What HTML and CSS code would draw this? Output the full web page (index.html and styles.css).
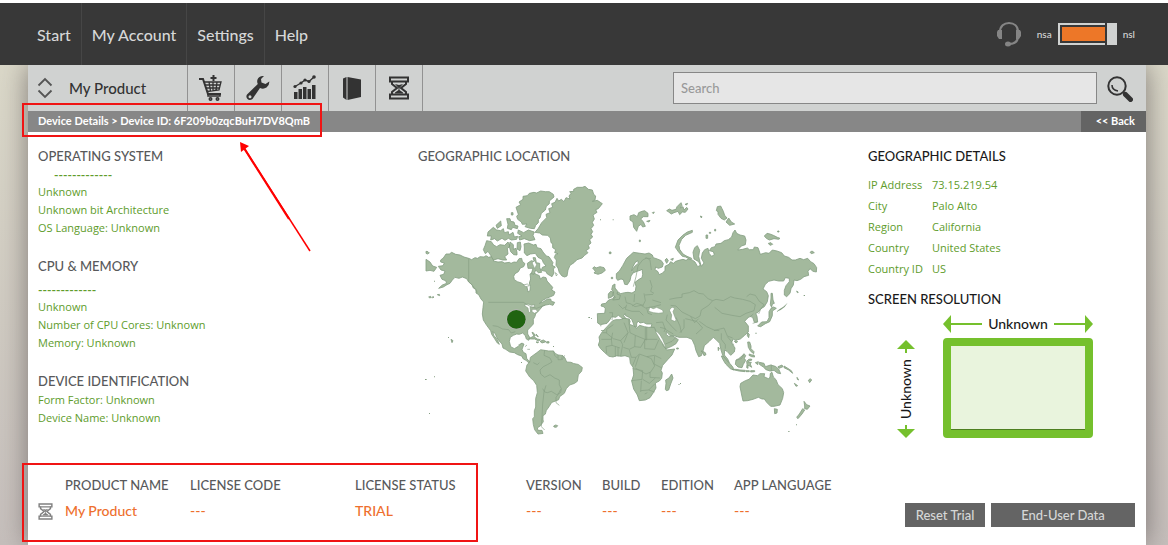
FILE: index.html
```
<!DOCTYPE html>
<html lang="en">
<head>
<meta charset="utf-8">
<title>Device Details</title>
<link rel="stylesheet" href="styles.css">
</head>
<body>
<svg class="defs" aria-hidden="true">
  <symbol id="hourglass" viewBox="0 0 20 24">
    <path d="M1 1.5h18v4H1zM1 18.5h18v4H1z" fill="none" stroke="currentColor" stroke-width="2"/>
    <path d="M3 5v3l5 4-5 4v3M17 5v3l-5 4 5 4v3" fill="none" stroke="currentColor" stroke-width="2"/>
    <path d="M6 8l4 1 4-1-3.500 4v2l3.500 2.500v1H6v-1l3.500-2.500v-2z" fill="currentColor"/>
  </symbol>
</svg>
<header class="topbar">
  <nav class="nav">
    <a href="#">Start</a><a href="#">My Account</a><a href="#">Settings</a><a href="#">Help</a>
  </nav>
  <div class="tools">
    <button class="headset" aria-label="Support">
      <svg width="26" height="26" viewBox="0 0 26 26"><path d="M4 11C4 5 8 2 13 2s9 3 9 9M22 15c0 5-3 8-9 8" fill="none" stroke="#858585" stroke-width="2.200"/><path d="M2 9h4v9H3L1 15v-4zM24 9h-4v9h3l2-3v-4z" fill="#858585"/><ellipse cx="12" cy="23" rx="3" ry="2.500" fill="#858585"/></svg>
    </button>
    <span class="switch-label">nsa</span>
    <button class="switch" aria-label="nsa or nsl"><span class="track"><span class="fill"></span></span><span class="knob"></span></button>
    <span class="switch-label">nsl</span>
  </div>
</header>
<main class="card">
  <div class="toolbar">
    <button class="product">
      <svg width="16" height="22" viewBox="0 0 16 22"><path d="M1.500 8.500L8 2l6.500 6.500M1.500 13.500L8 20l6.500-6.500" fill="none" stroke="#555" stroke-width="1.800"/></svg>
      <span>My Product</span>
    </button>
    <button class="tool" aria-label="Purchase"><svg width="26" height="28" viewBox="0 0 26 28" fill="none" stroke="#333"><path d="M1 5h4l5 15h13" stroke-width="2"/><path d="M6 8h17l-2 8-12 1.500M7 11h15M8 14h13M11 8l1.500 9M15 8v9M19 8l-1 8" stroke-width="1.300"/><path d="M15.500 1v6M12.500 4h6" stroke-width="2"/><path d="M10 20v2h12v-2" stroke-width="1.500"/><circle cx="12.500" cy="25" r="1.200" stroke-width="1.600"/><circle cx="19.500" cy="25" r="1.200" stroke-width="1.600"/></svg></button>
    <button class="tool" aria-label="Tools"><svg width="26" height="28" viewBox="0 0 26 28"><path fill="#333" fill-rule="evenodd" d="M19 2q-5-.5-6.500 3.500-.8 2.500.3 4.500L2 20.500q-1.500 2.500.5 4.500t5 0L15 14q3.500 1.500 6.500-.5 3-2 2.800-6L20.500 10 16.500 8.500l-.5-3.500zM5 21.200a1.500 1.500 0 1 1 0 3 1.500 1.500 0 0 1 0-3z"/></svg></button>
    <button class="tool" aria-label="Statistics"><svg width="26" height="28" viewBox="0 0 26 28"><path fill="#333" d="M2 18h3.500v7H2zM6.500 15H10v10H6.500zM11 13h3.500v12H11zM15.500 15H19v10h-3.500zM20 11h3.500v14H20z"/><path d="M3 12.500l6-3.500 4-3 4 1.500L22 3" fill="none" stroke="#333" stroke-width="1.400"/><g fill="#333"><circle cx="3" cy="12.500" r="1.600"/><circle cx="9" cy="9" r="1.600"/><circle cx="13" cy="6" r="1.600"/><circle cx="17" cy="7.500" r="1.600"/><circle cx="22" cy="3" r="1.800"/></g></svg></button>
    <button class="tool" aria-label="Package"><svg width="26" height="28" viewBox="0 0 26 28"><path fill="#333" d="M4 4.500L7.500 3v23L4 23.500zM8.500 3L22 5.500V23L8.500 26z"/></svg></button>
    <button class="tool" aria-label="Trials"><svg width="20" height="24"><use href="#hourglass"/></svg></button>
    <input class="search" type="search" placeholder="Search" aria-label="Search">
    <button class="find" aria-label="Find"><svg width="26" height="26" viewBox="0 0 26 26"><circle cx="10" cy="10" r="8.700" fill="none" stroke="#333" stroke-width="2"/><path d="M5 9q0 5 6 6" fill="none" stroke="#333" stroke-width="1.600"/><path d="M16.500 16.500l2 2" stroke="#333" stroke-width="2"/><path d="M18.500 18.500l5 5" stroke="#333" stroke-width="5" stroke-linecap="round"/></svg></button>
  </div>
  <div class="crumbs">
    <p>Device Details &gt; Device ID: 6F209b0zqcBuH7DV8QmB</p>
    <a href="#">&lt;&lt; Back</a>
  </div>
  <div class="content">
    <div class="specs">
      <section>
        <h2>OPERATING SYSTEM</h2>
        <p class="dashes indent">-------------</p>
        <p>Unknown</p><p>Unknown bit Architecture</p><p>OS Language: Unknown</p>
      </section>
      <section>
        <h2>CPU &amp; MEMORY</h2>
        <p class="dashes first">-------------</p>
        <p>Unknown</p><p>Number of CPU Cores: Unknown</p><p>Memory: Unknown</p>
      </section>
      <section>
        <h2>DEVICE IDENTIFICATION</h2>
        <p>Form Factor: Unknown</p><p>Device Name: Unknown</p>
      </section>
    </div>
    <section class="location">
      <h2>GEOGRAPHIC LOCATION</h2>
      <svg class="map" viewBox="0 0 1260 780" role="img" aria-label="World map">
        <g class="land">
          <path d="M92 240l8-6 8-12 10 0 7-5 12 6 13 2 12 6 14 4 9 4 10-6 8 2 7-5 12 1 6-4 8 5 12-3 4 6-2 8 14 3 12-1 8 4 14-2 5 3 9-4 8 1 7-11 8-1 2 9 8 7-4 9-10 4-6 11-10 6-4 8 2 10 9 6 12 4 8 6 9 6 3 15 6-4 1-12-3-11 4-12-2-15 9-5 10 6 9 4 3 10 8-6 9 2 3 10 9 10 8 9-3 8 10 6-4 10-9 4-13 5-12 7-9 8 12-5 13-8 9 0 2 7 10 3-5 9-10-3-12 2-9 3-8 10-7 8-6 5-2 8-5 9 0 14-9 10-8 8 0 12 7 12-4 7-7-4-3-10-8-8-10 4-8-1-10 4-9 6-3 12 4 16 11 6 12-7 9-9 8 2-6 16 4 9 8 4 2 14 7 9 12-3-2 7-9 2-10-9-8-4-5-9-12-4-10-6-14-2-12-8-8-4-3-12-9-10-7-10-4-11-8-6 4 12 10 12 6 14-6-4-9-14-8-12-3-11-12-16-10-16-3-18 2-20 2-16-8-9-7-13-8-5 0-11-8-4-4-10-10-8-6-10-13-5-10 4-12-3-8 8-7 10-9 4-11 7-14 4 11-10 13-5-3-8-11-4-6-12 11-3 4-10-12-3-8-11 14-2 4-8-11-3z"/>
          <path d="M48 238l12 8 8 12 12 4-8 12-12-3-12 2zM48 214l6 1 4 4-6 3-4-2z"/>
          <path d="M395 128l15-15-2-10 12-5-4-12 12-4-3-11 10-4 6-12 5 8 8-5 8 7 6-12 12 4-3-9 6-8-4-5 12-1 0-6 11-6 15 0 8-3 10 9 12 2 4 13 6 5-2 12-8 4 15-3 9 6 6 4-12 15-8 3 4 8-12 8 4 12-6 10 4 9-8 10 5 9-5 8 5 8-9 8 4 10-8 7 3 9-10 7 6 6-10 8-8 8-15 5-9 9-12 8-6 14-3 18-7 3-8-3-8-10-4-14-6-8 1-16-6-7 3-9 8-3-10-3 3-9-9-6 0-12-5-3-2-14-8-8-16-1-8-6-14-2 10-12z"/>
          <path d="M318 82l14-8-5-8 12-8 0-9 13-2 6-7 14-3 8 2 12-6 14 2 12 0 12 8 2 8-14 12 0 8-9 8-3 11-12 10-4 14-5 4 0 10-8 8-4 10-12-1-16-5 6-8-14 1-3-7-11-8-3-9 5-6zM325 150l16 8 14-8 18 6-4 10 6 13-16 3-16-6-14 4-3-10 10-2-13-8zM290 116l10 0 2 8 10 2 3 10 9 2-2 8-14-4-4 7-12-4 2-12zM258 136l14-13 2 14-12 8zM234 156l16-14 10 8 12 2 8-6 3 12 12-3 2 10 12-8 4 14 10-2-3 9-16 2-9-5-10 6-9-6-14 8-8-7-12 4 2-12-12 0z"/>
          <path d="M230 182l14 3 7 10 9 5 10-6 14 2 10-10 6 12-8 8 2 16-10 8 6 10-12 0-14-4-14 4-8-14-8-12-8 7-6-12 5-12zM300 186l10 8 0 14 8-3 3 12 0 8-10-1-9-9-4-15zM322 188l9-2 2 14-3 12-9-5zM342 192l14-3 14 6 8-2 3 10 12 3 6 10 10 12 8 2 12 18-3 8 10 5-6 6 2 12-6 11-14-8-5-8-13-3 3-9 11-4-8-10-4-10-12-6-8-12-15 2-10 5-8-8 0-18zM352 250l12-8 9 3-4-12 7 0 3 15 10 2 0 12 6 15-10 1-8-8-5 13-8-2 5-16-15 0z"/>
          <path d="M548 264l6-4 4 4 12-4 12 3 4 8-10 8-12 4-12-4 4-5zM304 98h5v7h-5z"/>
          <path d="M56 351l6-2 2 4-6 0zM68 350l4 1-4 3zM82 344l6-1 1 4zM598 216h5v5h-5z"/>
          <g transform="translate(0 360)">
            <path transform="translate(0 13) scale(1 .92)" d="M380 158l12-10 12 2 12 2 14 0 6 8 8 5 14 2 7 8 5 13 13 1 8 4 14 3 12 10-2 12-10 12-3 21-9 7-14 5-10 12-6 15-14 11-3 10-9 4-12 5-8 14-8 12-3 12-7 5 0 12 1 8-10 14-8 6 2 8 12 0 3 10-15 2-10-14-4-17-2-19 5-6 0-20 4-12 0-28 5-19-2-24-9-15-12-12-12-20 4-20 8-8 2-16z"/>
            <path d="M356 116l14-7 12 8 9 2-5 4-12-6-10 0zM390 124l10-4 8 5-12 4zM410 125h7v4h-7zM378 126l7 0-1 3zM366 97l4 1 6 9-4 2zM378 102l7 8-4-1zM431 378l6-3 6 2-4 5-7-1zM123 118l6 4-3 6z"/>
          </g>
          <g transform="translate(570 0)">
            <path d="M135 222l12-3 10 6 3 8 12 4 12 5 6 9-3 10-12 4-8-4-2 8 9 6 3 9 11-5 7-8 0-12 12-6 5-8 8 5 7-6 13-4 9-2 9 3 9-5 10 4 8 6 8 14 8-4-5-11-14-8-3-20 5-14 8-6 7 14-3 18 4 17 4 13 8-10-8-14 3-16 7-10 10-4 4 16 7 8 8-5-3-9-12-3 6-9 11-3 3-8 15-2 10-8 12-3 10-8 4-13 6-8 5 10 10 5 14 3 4 12-2 14-12 4-11 12 15-2 14-4 6 5 12 0 3-8 11 2 7 20 16-5 10 2 10-10 14 3 14 5 8 10 13 4 10 8 10 0 14-5 11 4 12-4 9 10 10 6 8 12-1 13-10-2-9-8-6 8 2 12-14 4-10 8-11 4-9-2-2 15-7 11-3 14-10 10-7-5 0-14 5-14 10-12 0-10-12-2-5 10-15 0-14-3-16 4-10 9-7 14 11 8 5 12-3 18-9 15-10 6-10 12-6 2 4 9 2 17-10 1-5-15-9-3-8 7-7 8 11 14 0 18-11 10-13 11-15 4-6-4-6 11 11 16-2 12-11 10-11-12-7-4-1 15 10 12 5 11-9-4-9-12-7-22-4-20-12-12-7-6-12 12-15 13-4 16-5 14-8 3-8-18-4-16-8-18-15-6-24 0-12-4-16-2-10-12 0 10 8 6 12-2 6 5 10 6-7 12-13 8-28 12-10-16-8-20-14-20-2-14 3-9-16 0-10-5-10 2-6-6-4 8 0 9-6 2-5-14-4-10-10-7-8-4-2-6-4 6 9 11 10 6-7 8-8-10-12-10-8-6-8 6-12-2-6 10-8 10-20 4-8-5-1-28 22-1 2-14-5-6-8-2 2-6 12-2 9-10 12-4 8-11 0-10 10 2 6 4 12-3 10-1 12 2 10-6 2-14-3-12 12-9 9-5 2-10-2-16-3 3-12 4-10 4-4-8 6-10 12-10-2-8-8 6-6 12-5 13 6 5-7 10-3 14-8 12-8-1-4-14-7-2-10 4-4-6 0-14 9-8 10-16 12-22 11-10 9-8z"/>
            <path d="M226 202l8-22 14-14 14-10 15-5 0 6-20 9-12 12-8 18 2 12 10 14 12 7 14 6-4 4-14-8-10-2-12-14-5-7z"/>
            <path d="M90 108l12-4 10 6 4-12 10-4 8-2 10 8 0 10-14 0-8 7 8 8 6 14-8 2-5-8-8 6-5 15-9-12-2-16-9-6zM200 92l8-5 8 4 12-3 3-8 12-12 3 8-5 8 8-4 3 10 8-8 4 5-8 10-9-1-8 8-5-10-12 4-8 4-8-6zM352 80l10-2 4 8 4 8 4 12 7 8-8 6-10-5-9-12 0-8-5-3zM378 126l8-12 8 12 10 6-15 4zM493 168l8-8 9 2 10 4 12 6 8 3-4 3-14-2-14 4-9-5zM505 190l8-2 5 5-8 3zM630 217l6-4 7 5-9 3zM533 153h4v3h-4zM301 108l5 2-2 4zM344 148h3v5h-3zM318 165h5v10h-5zM328 157h4v3h-4zM118 180h3v5h-3zM157 98l6-2-3 5zM140 124l10-3-3 5zM195 240l5-5 5 7-5 8zM212 238l8-3-2 6zM255 73l8-3-3 5zM34 292h4v4h-4z"/>
            <path d="M38 316l7-4 0 12 8 10-2 8 10 4-3 12-20 2 8-9-6-4 0-12-5-6zM25 342l7-8 8 2-3 14-12 5zM513 340l4 0 2 20 4 10-6 2-2 10-4-8 2-20zM590 333l5 4-3 1z"/>
            <g transform="translate(0 360)">
              <path d="M38 62l9-3 13 0 12-4 16 2 2 8-2 8 12 4 10 7 9-8 14 4 12 2 18 0 5 12 8 16 9 13 5 14 10 13 16-2 8-1-8 18-13 14-15 17-5 15 4 8-2 16-7 8-12 6 2 15-8 14-10 15-14 7-18 2-6-17-11-18-6-24 6-18-2-23-8-12-2-18-14-5-12 2-12-2-12 4-12-2-14-12-12-12-6-10 4-12-2-12 10-16z"/>
              <path d="M196 268l2-18-1-10 10-6 8-12 4 12-7 18-6 18-7 2zM230 144h5v3h-5zM303 153l5 1 8 4 2 6-6 3-4-9z"/>
              <path d="M364 168l7 2 10 12 10 10 8 10 2 8-10-4-14-14-8-13zM396 208l12 0 12 2 16 1-1 4-18-2-18-4zM438 212l10 0 0 3-10 0zM452 212l12 0 0 3-12 1zM408 180l8-4 10-8 6-7 5 6-4 8 4 6-7 12-4 10-12-2-8-8zM440 184l6-6 8-1 2 3-8 2-3 5 9 0-3 5 4 10-6-4-5-2 0 9-4-2 1-10zM443 126l6 0 4 12 0 8 9 9-1 6-9-7-7-12zM448 162l8 3 6 0 2 6-9-1-8-4zM443 98l5 5-2 10-4-6zM403 124l6-2 4 3-5 4zM354 142l4 2-3 8zM466 188l9-3-2 9zM478 187l14 3 4 10 16-5 14 4 10 8 6 14-10-2-10-8-12 2-12-4-8-8-12-8zM534 200l12-5 3 5-12 5zM552 198l10 6 12 8 4 8-12-10-14-7zM591 232l5 8-4-2zM583 250l10 7-5 2zM625 241l6-5 4 4-6 8z"/>
              <path d="M473 78l12-12 16-1 6-12 0-18 6-10 8-4 8 4-12 8 0 14-8 18-13 6-14 9z"/>
              <path d="M420 260l2-10 14-8 11-4 12-13 14 2 7-6 14 0-2 9 13 6 5-4 1-12 5-3 4 14 8 8 6 15 13 12 4 12-3 17-8 20-18 4-10 0-12-12-7-10-7 0-11-5-16 6-16 4-14 1-4-18zM523 326l9 2-1 11-7 2zM612 304l8 10 10 4-8 10-8-2 0-8zM608 326l6 4-8 12-12 14-4-4 8-10z"/>
            </g>
          </g>
        </g>
        <g class="specks">
          <path d="M608 118h3v3h-3zM570 118h3v3h-3zM1181 345h4v3h-4zM114 471h3v3h-3zM45 597h5v3h-5zM72 589h3v3h-3zM333 546h3v3h-3zM57 699h3v3h-3zM535 411h5v3h-5zM543 415h3v2h-3zM571 436h3v3h-3zM573 451h10v2h-10zM429 498h3v3h-3zM805 612h4v2h-4zM810 609h3v3h-3zM1036 458h4v3h-4zM1158 733h3v3h-3zM1134 753h5v2h-5zM72 302h3v3h-3z"/>
          <path d="M1098 396l14-6 12-9 9-13-13 12-12 8z"/>
        </g>
        <g class="water">
          <path d="M342 376l12-4 10 4 10-2-2 8-12 0 2 14-6 2-2-14zM366 388l10 0 8 6-10 6-8-4zM340 315l12-3 6 5-10 3zM366 248l8-6 6 12-6 12zM436 278l6 5-3 5z"/>
          <path transform="translate(570 360)" d="M146 34l3-13 11 5 10-4 18 8 2 8-14 2-16-2zM208 30l8-9 8 4-5 10 5 14 5 12-6 3-10-5 2-14zM170 94l10 10 8 14 10 24-4-2-14-22-12-20z"/>
        </g>
        <g class="borders">
          <path d="M176 235v70l12 12 14 20M235 367h105l20 12 20 6 26-10M248 437l14 2 16 8 18 2 8 10 12-4M325 495l12-6M345 500l6-5M352 508l8 0"/>
          <g transform="translate(0 360)"><path d="M404 150l-2 16 18 8 6 12-14 8-12 6-10 10 2 12 12 10 16-8 14 10 14 6 0 14 6 12-2 12-12 6-16-10-12 4-8-2-6-10M430 152l4 14 8 8M444 165l0 14 10 0 4-14M456 180l8-14M370 188l12 6 6-6M408 256l-6 20-4 36-2 40-2 28 10 10M452 268l-8 16-6 8 0 16 10 8"/></g>
          <g transform="translate(570 0)">
            <path d="M100 320l8-30 6-32 14-18 12-6 10 6 4 30M135 234l18 2M150 300l6 20-4 14 10 6M208 358l20-4 18-2 0-10 22-4 14-6 14 8 14 2 14 14 14 6 10-4 22 4 22-12 12 4 24 4 22 6 16 10-4 18-24 8-18 10-24-4-30-6-12-10-10-8M440 350l10-8 16 4 12 18 14 10-10 14-6 14M338 362l-12 14-22 14-4 18-14 8-20-10-20-10-18-18-16-2M75 350l4 18 14 4 12 8 18-4 14 8 24-4 22-6M104 342l-2 24M132 340l4 22-8 16M56 374l12 12 10-6M80 374l-4 14 20 6 22 0 12 12M140 384l4 16 12 4M96 378l14-8 20 6M135 345l24-2M157 360l26 8"/>
            <g transform="translate(0 360)"><path d="M202 44l-4 16 18 20 14 14M228 52l12 26 4 20M252 58l0 26-12 14M272 50l12 18 12-12M256 56l34 8 18 20-20 18M298 64l22 16 22 10 16 2M342 92l14-4 16-4 10 24 16 6M364 100l0 18 12 16 0 12M382 110l12 14 8 12M168 68l20-2 8 22 24 14M180 82l16 4-4 10M196 132l20-8 16-16M448 52l12-10M458 70l14-4M28 38l10 0-2 22"/>
            <path d="M8 98l12 0 0-10 20-14M18 98l22 18 22 6 22-24-12-30M86 58l4 40 16 8 34 14 0-38M136 82v36l36 0M62 122l6 12-6 34M84 98l-12 30M106 106l-2 34-16 8-18-6M104 140l18 2 14-24M134 118l0 28 30 2 12-28M4 118h30l4-20M34 116l2 20-18 4M18 140l2 20M36 136l24 8M46 140l0 30M54 142l0 28M88 150l6 22 14 0 10-10 22 8 24-4 20 10M108 172l-10 24M118 164l-12 36M140 170l14 6 10 22-12 18-14 6-32-18M164 168l-2 24 24 12M150 216l0 16 30 2M98 206l30 6-2 26-32 4M128 238l20 12 18-16M124 242l-2 34M122 272l24-2 18-18M146 270l18 6M134 282l8-4"/>
            <path d="M410 180l14-4 8-12M514 194v20"/></g>
          </g>
        </g>
        <circle cx="319" cy="418" r="30" fill="#b9b7b9"/><circle cx="319" cy="418" r="28" fill="#206411"/>
      </svg>
    </section>
    <div class="geo">
      <h2>GEOGRAPHIC DETAILS</h2>
      <dl>
        <dt>IP Address</dt><dd>73.15.219.54</dd>
        <dt>City</dt><dd>Palo Alto</dd>
        <dt>Region</dt><dd>California</dd>
        <dt>Country</dt><dd>United States</dd>
        <dt>Country ID</dt><dd>US</dd>
      </dl>
      <h2>SCREEN RESOLUTION</h2>
      <div class="resolution">
        <div class="width"><i class="head left"></i><i class="line"></i><span>Unknown</span><i class="line"></i><i class="head right"></i></div>
        <div class="height"><i class="head up"></i><i class="stem"></i><span>Unknown</span><i class="stem"></i><i class="head down"></i></div>
        <div class="screen"></div>
      </div>
    </div>
  </div>
  <div class="license">
    <table>
      <thead><tr><td class="c-icon"></td><th class="c-name">PRODUCT NAME</th><th class="c-code">LICENSE CODE</th><th class="c-status">LICENSE STATUS</th><th class="c-version">VERSION</th><th class="c-build">BUILD</th><th class="c-edition">EDITION</th><th>APP LANGUAGE</th></tr></thead>
      <tbody><tr><td class="trial"><svg width="15" height="17"><use href="#hourglass"/></svg></td><td>My Product</td><td>---</td><td>TRIAL</td><td>---</td><td>---</td><td>---</td><td>---</td></tr></tbody>
    </table>
    <div class="actions"><button class="reset">Reset Trial</button><button class="data">End-User Data</button></div>
  </div>
</main>
<div class="mark mark-device"></div>
<div class="mark mark-license"></div>
<svg class="arrow" width="72" height="112" viewBox="0 0 72 112" aria-hidden="true"><path d="M71 111L5 8" stroke="#f00" stroke-width="1.500"/><path d="M50 79L5 8" stroke="#f00" stroke-width="2.200"/><path d="M1 2l9 4-8 6z" fill="#f00"/></svg>
</body>
</html>
```

FILE: styles.css
```
* { box-sizing: border-box; }
body {
  margin: 0;
  min-height: 100vh;
  display: flex;
  flex-direction: column;
  border-top: 3px solid #fff;
  background: linear-gradient(#dedccb, #c6bfbc);
  font-family: Lato, "Noto Sans", sans-serif;
  font-size: 14px;
  color: #58595b;
  position: relative;
}
h2, p, dl, dd { margin: 0; }
button { font: inherit; border: 0; background: none; padding: 0; }
a { text-decoration: none; }
.defs { position: absolute; width: 0; height: 0; }

.topbar { height: 62px; background: #383838; display: flex; justify-content: space-between; align-items: center; padding: 0 33px 0 27px; }
.nav { display: flex; align-self: stretch; }
.nav a { display: flex; align-items: center; padding: 0 10px; color: #d6d7d7; font-size: 16px; font-weight: 500; border-right: 1px solid #464646; }
.nav a:last-child { border-right: 0; }
.tools { display: flex; align-items: center; }
.headset { height: 26px; margin-right: 15px; }
.switch-label { color: #d6d7d7; font-size: 10px; font-weight: 500; }
.switch { display: flex; gap: 2px; margin: 0 6px; height: 22px; }
.track { width: 47px; height: 22px; border: 2px solid #d0d2d1; border-right: 0; padding: 2px 0 2px 2px; }
.fill { display: block; height: 14px; background: #ed7728; }
.knob { width: 10px; height: 22px; background: #d0d2d1; }

.card { flex: 1; margin: 0 22px 0 28px; background: #fff; box-shadow: 0 0 26px rgba(90, 82, 82, .7); clip-path: inset(0 -28px); }
.toolbar { height: 46px; background: #d0d2d1; display: flex; align-items: center; }
.product { width: 160px; height: 46px; padding-left: 9px; display: flex; align-items: center; gap: 16px; border-right: 1px solid #929292; color: #333; font-size: 15px; font-weight: 500; }
.tool { width: 47px; height: 46px; display: flex; align-items: center; justify-content: center; border-right: 1px solid #929292; color: #333; }
.search { flex: 1; min-width: 0; height: 32px; margin-left: 250px; border: 1px solid #878787; border-radius: 0; background: #e6e6e6; padding: 0 7px; font: inherit; font-size: 13px; font-weight: 500; }
.search::placeholder { color: #999; opacity: 1; }
.find { width: 49px; padding: 1px 0 0 10px; display: flex; }
.crumbs { height: 21px; background: #878787; display: flex; justify-content: space-between; font-size: 11px; font-weight: 700; line-height: 20px; color: #fff; padding-left: 10px; }
.crumbs a { width: 65px; background: #646464; color: #fff; text-align: right; padding-right: 11px; }

.content { display: grid; grid-template-columns: 372px 1fr 278px; padding: 14px 0 0 10px; min-height: 326px; }
h2 { font-size: 13px; font-weight: 500; line-height: 20px; }
.specs p { font-family: "Open Sans", "Noto Sans", sans-serif; font-size: 11px; font-weight: 500; line-height: 18px; color: #609c2b; }
.specs section { min-height: 110px; }
.specs section + section { min-height: 115px; }
.specs section:last-child { min-height: 0; }
.specs .dashes { font-family: Lato, sans-serif; font-size: 12px; font-weight: 700; line-height: 17px; }
.specs .indent { padding-left: 16px; }
.specs .first { padding-top: 5px; }
.location h2 { padding-left: 8px; }
.map { display: block; width: 100%; max-width: 420px; margin-top: 14px; }
.location { height: 298px; }
.land { fill: #a3b99d; stroke: #869f83; stroke-width: 2.5; stroke-linejoin: round; }
.specks { fill: #869f83; }
.water { fill: #fff; stroke: #869f83; stroke-width: 2; }
.borders { fill: none; stroke: #869f83; stroke-width: 2; }
.geo h2 { color: #1a1a1a; }
.geo dl { display: grid; grid-template-columns: 64px 1fr; font-family: "Open Sans", "Noto Sans", sans-serif; font-size: 11px; font-weight: 500; line-height: 21px; color: #609c2b; padding: 8px 0 10px; }
.resolution { display: grid; grid-template-columns: 75px 150px; grid-template-rows: 29px 100px; color: #1a1a1a; font-weight: 500; }
.width { grid-column: 2; display: flex; align-items: center; }
.width span { padding: 0 6px; }
.line { flex: 1; height: 2px; background: #75c02d; }
.head { border: 9px solid transparent; width: 0; height: 0; }
.left { border-left: 0; border-right: 8px solid #75c02d; }
.right { border-right: 0; border-left: 8px solid #75c02d; }
.height { display: flex; flex-direction: column; align-items: center; padding-top: 2px; }
.height span { writing-mode: vertical-rl; transform: rotate(180deg); line-height: 20px; flex: 1; text-align: center; }
.stem { width: 2px; height: 4px; background: #75c02d; }
.up { border-top: 0; border-bottom: 9px solid #75c02d; }
.down { border-bottom: 0; border-top: 9px solid #75c02d; }
.screen { border: 8px solid #75c02d; border-radius: 4px; background: #e9f4dd; box-shadow: inset 0 -1px #4e7f20; }

.license { display: flex; justify-content: space-between; align-items: flex-start; padding: 14px 11px 0 10px; }
table { border-collapse: collapse; table-layout: fixed; line-height: 26px; }
th { font-size: 13px; font-weight: 500; text-align: left; padding: 0; white-space: nowrap; }
td { padding: 0; color: #ee6f2d; font-size: 14px; font-weight: 500; }
.trial { color: #808080; }
.trial svg { display: block; }
.c-icon { width: 27px; }
.c-name { width: 125px; }
.c-code { width: 165px; }
.c-status { width: 171px; }
.c-version { width: 76px; }
.c-build { width: 59px; }
.c-edition { width: 73px; }
.actions { display: flex; gap: 6px; padding-top: 31px; }
.actions button { height: 24px; background: #646464; color: #d6d7d7; font-size: 13px; font-weight: 500; }
.reset { width: 80px; }
.data { width: 144px; }

.mark { position: absolute; left: 22px; border: 2px solid #f01414; }
.mark-device { top: 100px; width: 300px; height: 34px; }
.mark-license { top: 460px; width: 456px; height: 79px; }
.arrow { position: absolute; left: 239px; top: 137px; }
```
